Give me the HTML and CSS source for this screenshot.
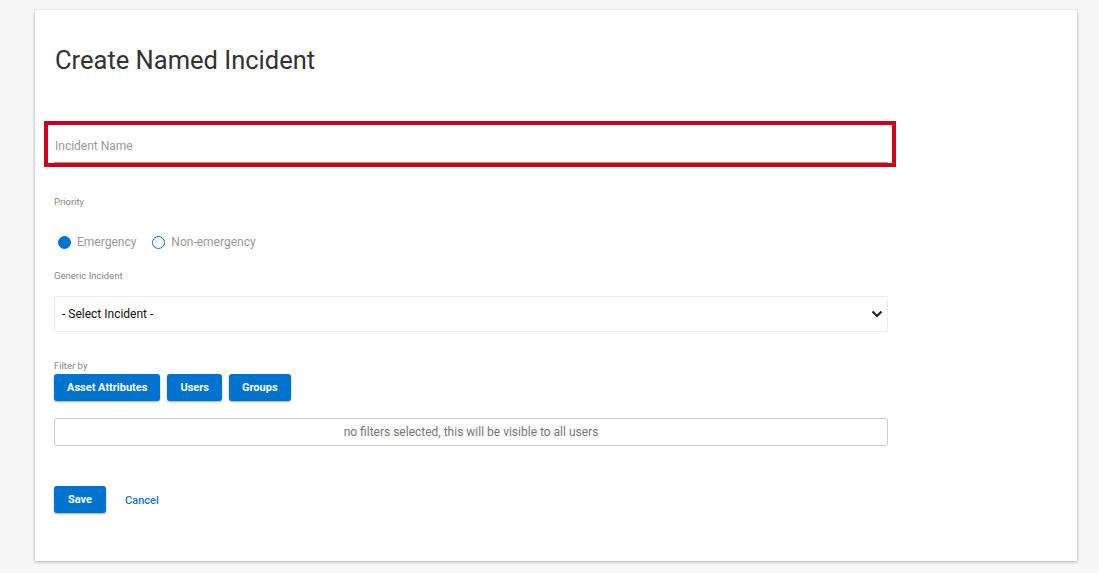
FILE: index.html
```html
<!DOCTYPE html>
<html>

<head>
    <title>Create Named Incident</title>
    <link rel="stylesheet" href="styles.css">
</head>

<body>
    <div class="card">
        <h1 class="pageTitle">Create Named Incident</h1>

        <div class="nameBox">
            <input class="nameInput" type="text" placeholder="Incident Name">
        </div>

        <p class="fieldLabel priorityLabel">Priority</p>
        <div class="radioRow">
            <label class="radioOption">
                <span class="radioDot checked"></span>
                Emergency
            </label>
            <label class="radioOption">
                <span class="radioDot"></span>
                Non-emergency
            </label>
        </div>

        <p class="fieldLabel">Generic Incident</p>
        <div class="selectBox">
            <span>- Select Incident -</span>
            <svg class="chevron" width="12" height="8" viewBox="0 0 12 8">
                <path d="M1.5 1.5 L6 6 L10.5 1.5" fill="none" stroke="#222" stroke-width="2.2" />
            </svg>
        </div>

        <p class="fieldLabel filterLabel">Filter by</p>
        <div class="filterButtons">
            <button class="blueButton">Asset Attributes</button>
            <button class="blueButton">Users</button>
            <button class="blueButton">Groups</button>
        </div>

        <div class="filterSummary">no filters selected, this will be visible to all users</div>

        <div class="actions">
            <button class="blueButton saveButton">Save</button>
            <a class="cancelLink" href="#">Cancel</a>
        </div>
    </div>
</body>

</html>
```

FILE: styles.css
```css
body {
    margin: 0;
    padding: 10px 22px 12px 35px;
    background-color: #f7f7f7;
    font-family: Roboto, 'Liberation Sans', sans-serif;
}

.card {
    background-color: white;
    box-shadow: 0 1px 3px rgba(0, 0, 0, 0.3);
    padding: 33px 189px 48px 19px;
}

.pageTitle {
    margin: 0 0 44px 1px;
    font-size: 25.5px;
    font-weight: 400;
    line-height: 34px;
    color: #333;
}

.nameBox {
    margin: 0 -8px 0 -10px;
    border: 4px solid #d0021b;
    padding: 0 4px 0 6px;
    height: 38px;
}

.nameInput {
    display: block;
    width: 100%;
    box-sizing: border-box;
    height: 38px;
    border: none;
    border-bottom: 1.5px solid #9a9a9a;
    padding: 4px 0 0 1px;
    font-family: inherit;
    font-size: 12px;
    outline: none;
}

.nameInput::placeholder {
    color: #999;
}

.fieldLabel {
    margin: 0;
    font-size: 9.5px;
    color: #888;
    line-height: 12px;
}

.priorityLabel {
    margin-top: 29px;
}

.radioRow {
    display: flex;
    gap: 16px;
    margin: 27px 0 21px 4px;
}

.radioOption {
    display: flex;
    align-items: center;
    gap: 6px;
    font-size: 12px;
    color: #999;
    line-height: 14px;
}

.radioDot {
    width: 11px;
    height: 11px;
    border: 1.5px solid #0073cf;
    border-radius: 50%;
}

.radioDot.checked {
    background-color: #0073cf;
}

.selectBox {
    display: flex;
    justify-content: space-between;
    align-items: center;
    margin-top: 14px;
    height: 34px;
    border: 1px solid #ececec;
    padding: 0 4px 0 7px;
    font-size: 12px;
    color: #111;
}

.filterLabel {
    margin-top: 28px;
}

.filterButtons {
    display: flex;
    gap: 7px;
    margin-top: 2px;
}

.blueButton {
    height: 27px;
    padding: 0 13px;
    border: none;
    border-radius: 3px;
    background-color: #0073cf;
    color: white;
    font-family: inherit;
    font-size: 11px;
    font-weight: 700;
    box-shadow: 0 1px 2px rgba(0, 0, 0, 0.35);
    cursor: pointer;
}

.filterSummary {
    margin-top: 17px;
    height: 26px;
    border: 1px solid #cfcfcf;
    border-radius: 2px;
    font-size: 12px;
    line-height: 26px;
    color: #777;
    text-align: center;
}

.actions {
    display: flex;
    align-items: center;
    gap: 19px;
    margin-top: 40px;
}

.saveButton {
    padding: 0 14px;
}

.cancelLink {
    padding-top: 2px;
    font-size: 11px;
    font-weight: 500;
    color: #1a73d0;
    text-decoration: none;
}
```
